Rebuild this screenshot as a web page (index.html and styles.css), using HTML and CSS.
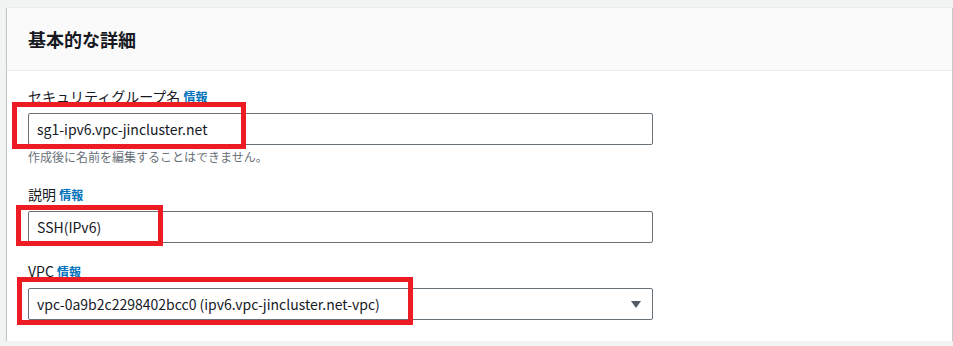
FILE: index.html
```html
<!DOCTYPE html>
<html lang="ja">
<head>
    <title>基本的な詳細</title>
    <meta http-equiv="content-type" content="text/html;charset=UTF-8" />
    <link rel="stylesheet" href="styles.css">
</head>
    <body>
        <div class="panel">
            <div class="panel-header">
                <h2>基本的な詳細</h2>
            </div>
            <div class="panel-body">
                <div class="field">
                    <div class="field-label">セキュリティグループ名 <a class="info">情報</a></div>
                    <div class="control">
                        <div class="input">sg1-ipv6.vpc-jincluster.net</div>
                        <div class="mark mark-name"></div>
                    </div>
                    <div class="hint">作成後に名前を編集することはできません。</div>
                </div>
                <div class="field">
                    <div class="field-label">説明 <a class="info">情報</a></div>
                    <div class="control">
                        <div class="input">SSH(IPv6)</div>
                        <div class="mark mark-desc"></div>
                    </div>
                </div>
                <div class="field">
                    <div class="field-label">VPC <a class="info">情報</a></div>
                    <div class="control">
                        <div class="input select">
                            <span>vpc-0a9b2c2298402bcc0 (ipv6.vpc-jincluster.net-vpc)</span>
                            <svg class="caret" width="10" height="7" viewBox="0 0 10 7"><path d="M0 0h10L5 7z" fill="#545b64"/></svg>
                        </div>
                        <div class="mark mark-vpc"></div>
                    </div>
                </div>
            </div>
        </div>
    </body>
</html>
```

FILE: styles.css
```css
body {
    margin: 0;
    padding: 7px 1px 0 7px;
    background: #f2f3f3;
    font-family: "Noto Sans CJK JP", sans-serif;
    color: #16191f;
}

.panel {
    background: #fff;
    border-top: 1px solid #eaeded;
    box-shadow: 0 1px 1px 0 rgba(0, 28, 36, 0.3), 1px 1px 1px 0 rgba(0, 28, 36, 0.15), -1px 1px 1px 0 rgba(0, 28, 36, 0.15);
}

.panel-header {
    height: 62px;
    background: #fafafa;
    border-bottom: 1px solid #eaeded;
    display: flex;
    align-items: center;
    padding-left: 21px;
}

.panel-header h2 {
    margin: 0;
    font-size: 18px;
    font-weight: bold;
}

.panel-body {
    padding: 14px 20px 21px 21px;
}

.field {
    margin-bottom: 17px;
}

.field:last-child {
    margin-bottom: 0;
}

.field-label {
    font-size: 14px;
    line-height: 22px;
    height: 22px;
    margin-bottom: 6px;
}

.info {
    color: #0073bb;
    font-size: 12px;
    font-weight: bold;
}

.control {
    position: relative;
    width: 625px;
}

.input {
    box-sizing: border-box;
    height: 32px;
    border: 1px solid #687078;
    border-radius: 2px;
    padding: 0 8px;
    font-size: 14px;
    line-height: 30px;
}

.select {
    display: flex;
    justify-content: space-between;
    align-items: center;
    padding-right: 11px;
}

.hint {
    font-size: 12px;
    line-height: 18px;
    height: 18px;
    color: #687078;
    margin-top: 3px;
}

.mark {
    position: absolute;
    border: 5px solid #ed1c24;
    box-sizing: border-box;
}

.mark-name {
    left: -16px;
    top: -11px;
    width: 234px;
    height: 47px;
}

.mark-desc {
    left: -12px;
    top: -6px;
    width: 147px;
    height: 41px;
}

.mark-vpc {
    left: -11px;
    top: -11px;
    width: 396px;
    height: 48px;
}
```
